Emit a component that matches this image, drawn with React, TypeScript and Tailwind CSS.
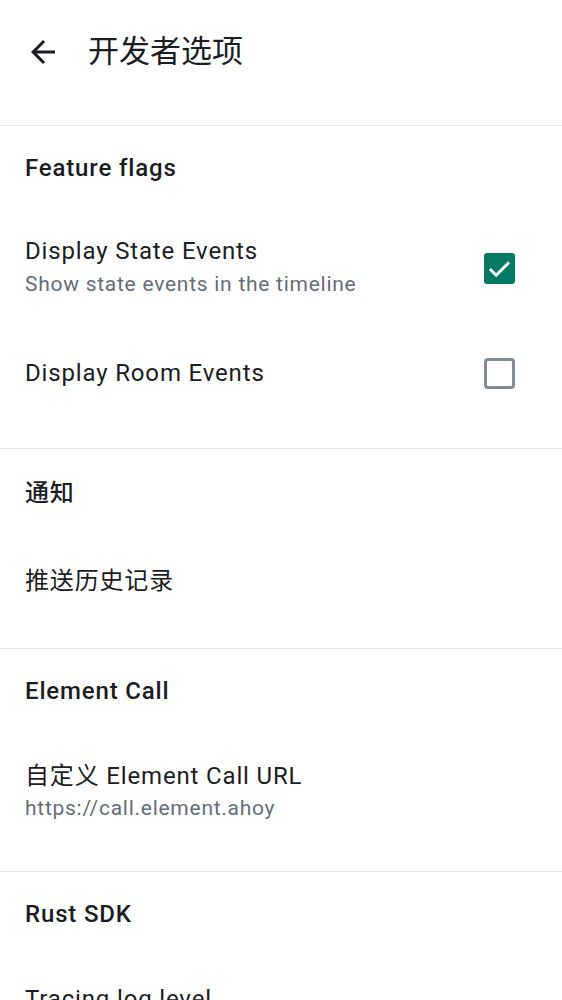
const font = { fontFamily: "Roboto, 'Noto Sans CJK SC', sans-serif" };

function SectionTitle({ children }: { children: React.ReactNode }) {
  return (
    <div className="px-[25px] text-[24px] leading-[32px] font-medium tracking-[0.035em] text-[#1b1d22]">
      {children}
    </div>
  );
}

function Checkbox({ checked }: { checked: boolean }) {
  if (checked) {
    return (
      <div className="flex h-[31px] w-[31px] items-center justify-center rounded-[3px] bg-[#007a61]">
        <svg width="27" height="27" viewBox="0 0 24 24" fill="none">
          <path d="M3.5 12.5l5.5 5.5L20.5 6.5" stroke="white" strokeWidth="2.6" />
        </svg>
      </div>
    );
  }
  return <div className="h-[31px] w-[31px] rounded-[4px] border-[3px] border-[#818a95]" />;
}

const rowTitle = "text-[24px] leading-[32px] tracking-[0.035em] text-[#1b1d22]";
const rowSub = "text-[21px] leading-[32px] tracking-[0.035em] text-[#656d77]";

export default function App() {
  return (
    <div className="min-h-[1000px] bg-white" style={font}>
      <header className="flex h-[126px] items-center border-b border-[#e7e9ec] pb-[21px]">
        <button type="button" className="ml-[25px] text-[#1b1d22]" aria-label="Back">
          <svg width="36" height="36" viewBox="0 0 24 24" fill="currentColor">
            <path d="M20 11H7.83l5.59-5.59L12 4l-8 8 8 8 1.41-1.41L7.83 13H20v-2z" />
          </svg>
        </button>
        <h1 className="ml-[27px] text-[31px] leading-[40px] text-[#1b1d22]">开发者选项</h1>
      </header>

      <section className="pt-[26px] pb-[59px]">
        <SectionTitle>Feature flags</SectionTitle>
        <div className="mt-[51px] flex items-center justify-between pl-[25px] pr-[47px]">
          <div>
            <p className={rowTitle}>Display State Events</p>
            <p className={`${rowSub} leading-[34px]`}>Show state events in the timeline</p>
          </div>
          <Checkbox checked />
        </div>
        <div className="mt-[56px] flex items-center justify-between pl-[25px] pr-[47px]">
          <p className={rowTitle}>Display Room Events</p>
          <Checkbox checked={false} />
        </div>
      </section>

      <section className="border-t border-[#e7e9ec] pt-[28px] pb-[51px]">
        <SectionTitle>通知</SectionTitle>
        <p className={`mt-[56px] px-[25px] ${rowTitle}`}>推送历史记录</p>
      </section>

      <section className="border-t border-[#e7e9ec] pt-[26px] pb-[47px]">
        <SectionTitle>Element Call</SectionTitle>
        <div className="mt-[53px] px-[25px]">
          <p className={rowTitle}>自定义 Element Call URL</p>
          <p className={`${rowSub} leading-[30px]`}>https://call.element.ahoy</p>
        </div>
      </section>

      <section className="border-t border-[#e7e9ec] pt-[26px]">
        <SectionTitle>Rust SDK</SectionTitle>
        <p className={`mt-[53px] px-[25px] ${rowTitle}`}>Tracing log level</p>
      </section>
    </div>
  );
}
